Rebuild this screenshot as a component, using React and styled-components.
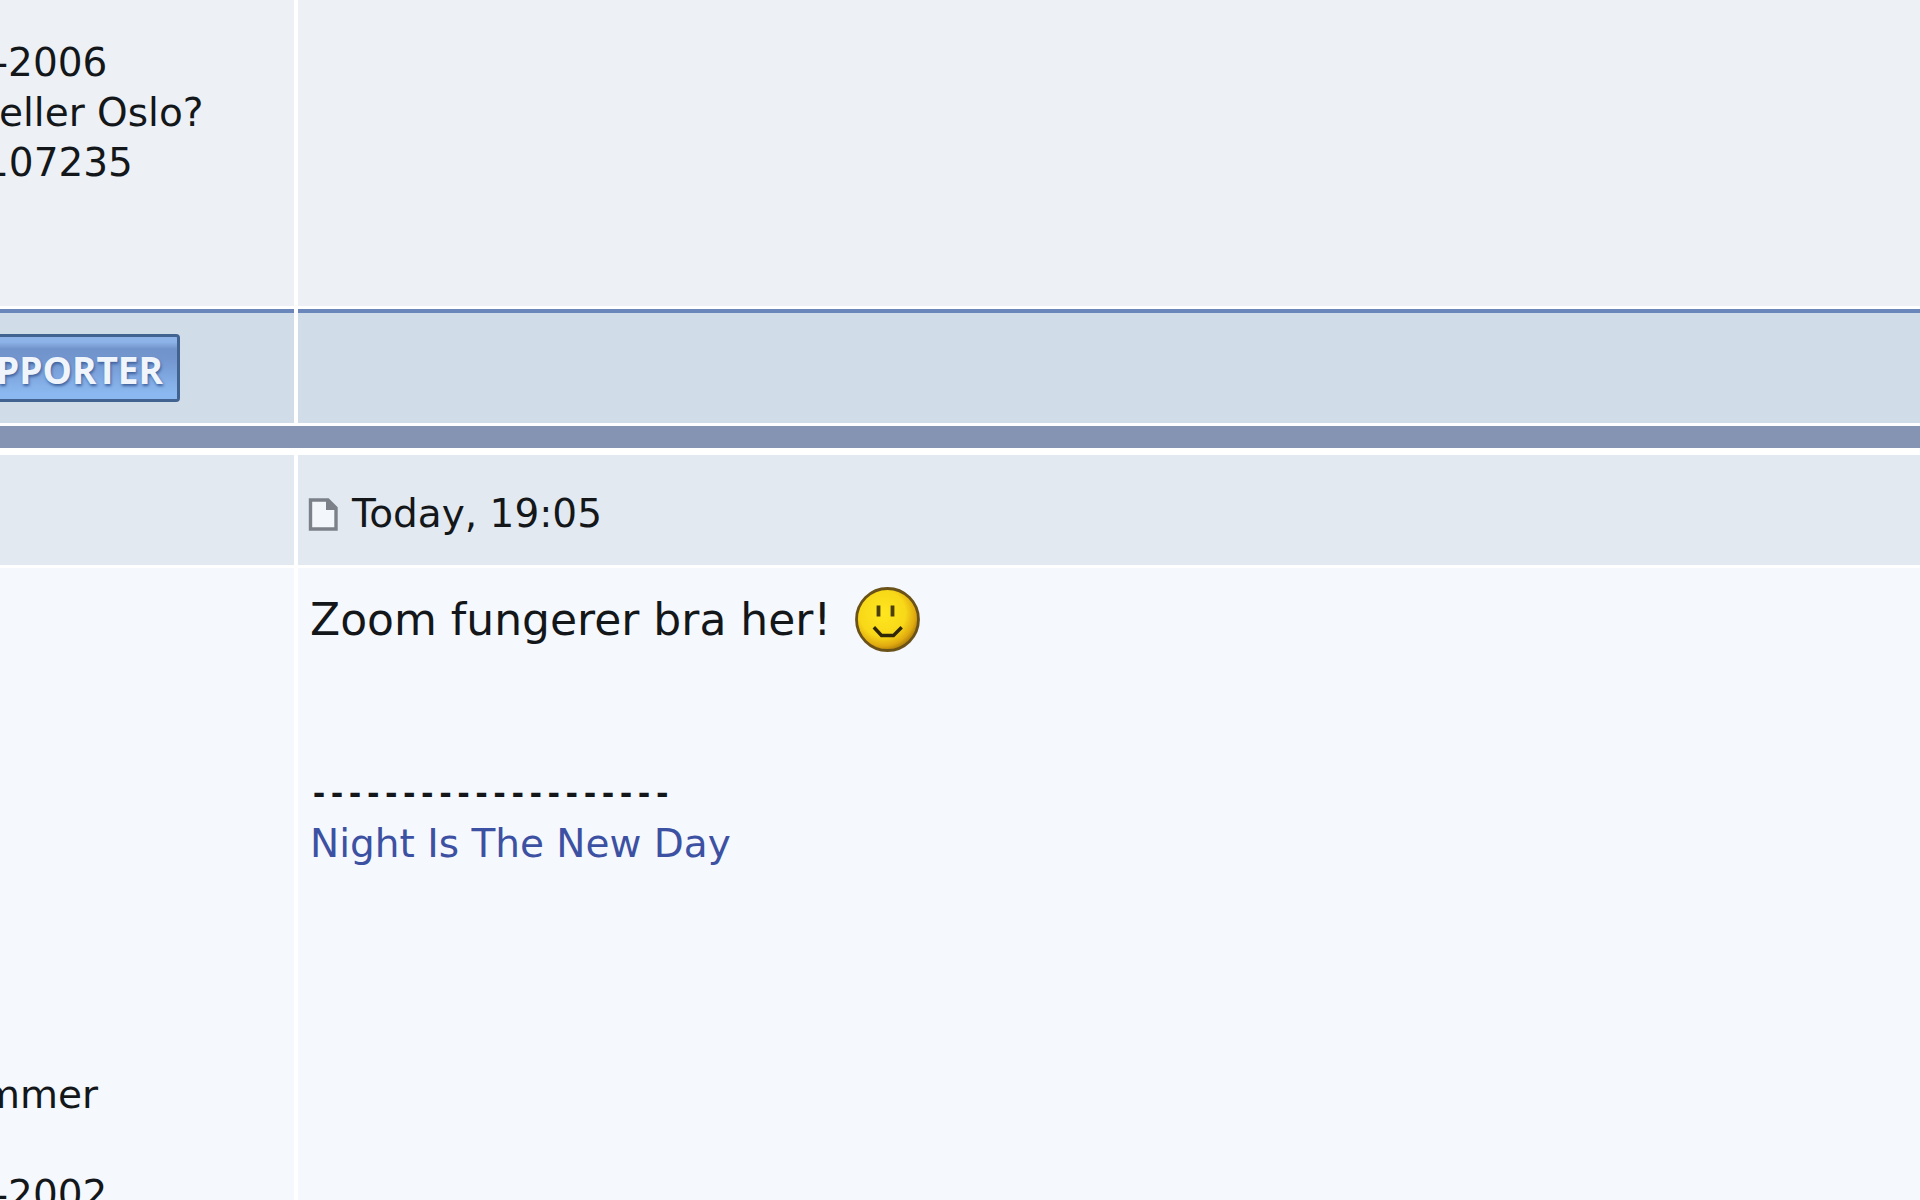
import React from "react";
import styled, { createGlobalStyle } from "styled-components";

const GlobalStyle = createGlobalStyle`
  *, *::before, *::after { box-sizing: border-box; }
  body {
    margin: 0;
    background: #ffffff;
    color: #14171a;
    font-family: "DejaVu Sans", Verdana, sans-serif;
  }
`;

const Thread = styled.main`
  display: flex;
  flex-direction: column;
  height: 100vh;
  overflow: hidden;
`;

const Row = styled.div`
  flex: ${(p) => (p.$grow ? "1 0 auto" : "none")};
  display: grid;
  grid-template-columns: 294px minmax(0, 1fr);
  column-gap: 4px;
`;

const Cell = styled.div`
  min-width: 0;
  background: ${(p) => p.$bg};
`;

const FooterCell = styled(Cell)`
  border-top: 4px solid #6b86ba;
  padding: 21px 0;
`;

const HeaderCell = styled(Cell)`
  display: flex;
  align-items: center;
  gap: 14px;
  padding: 34px 10px 26px;
`;

const Profile = styled(Cell)`
  padding-top: ${(p) => p.$top}px;
  padding-bottom: 118px;
  overflow: hidden;
  font-size: 39px;
  line-height: 50px;
  white-space: nowrap;
`;

const ProfileLine = styled.div`
  min-height: 50px;
  text-indent: ${(p) => p.$indent}px;
`;

const Divider = styled.div`
  flex: none;
  height: 32px;
  border-top: 3px solid #ffffff;
  border-bottom: 7px solid #ffffff;
  background: #8494b2;
`;

const Rule = styled.div`
  flex: none;
  height: 3px;
  background: #ffffff;
`;

const Badge = styled.div`
  display: flex;
  align-items: center;
  justify-content: flex-end;
  width: 180px;
  height: 68px;
  padding: 4px 14px 0 0;
  overflow: hidden;
  border: 3px solid #42628f;
  border-left: 0;
  border-radius: 0 4px 4px 0;
  background: linear-gradient(#8db3e8 0, #8db3e8 5px, #7193cb 12px, #7396cf 22px, #8bb8f0 56px);
  color: #f0f5fc;
  font: bold 37px/50px "Open Sans", sans-serif;
  text-shadow: 1px 2px 3px #3f619c;
`;

const PostDate = styled.time`
  font-size: 39px;
  line-height: 50px;
`;

const Content = styled(Cell)`
  padding: 19px 12px 0;
`;

const Message = styled.div`
  display: flex;
  align-items: center;
  gap: 24px;
  height: 65px;
  font-size: 44px;
  white-space: nowrap;
`;

const Signature = styled.footer`
  margin-top: 117px;
  font-size: 39px;
  line-height: 50px;
`;

const Dashes = styled.div`
  font-family: "DejaVu Sans Mono", monospace;
  font-weight: bold;
  font-size: 30px;
`;

const SignatureLink = styled.a`
  color: #3d51a3;
  text-decoration: none;
`;

function PostIcon() {
  return (
    <svg width="30" height="33" viewBox="0 0 30 33" aria-hidden="true">
      <path d="M2.5 2H20L28 10V31H2.5Z" fill="#f3f6fb" stroke="#7c8189" strokeWidth="3.4" />
      <path d="M18 2H21L28 9V12H18Z" fill="#7c8189" />
    </svg>
  );
}

function Smiley() {
  return (
    <svg width="65" height="65" viewBox="0 0 65 65" role="img" aria-label="smile">
      <defs>
        <radialGradient id="face" cx="0.42" cy="0.4" r="0.62">
          <stop offset="0" stopColor="#ffe620" />
          <stop offset="0.6" stopColor="#f8d818" />
          <stop offset="0.85" stopColor="#e0aa10" />
          <stop offset="1" stopColor="#a87908" />
        </radialGradient>
      </defs>
      <circle cx="32.5" cy="32.5" r="31" fill="url(#face)" stroke="#6b5219" strokeWidth="2.8" />
      <path d="M23.5 18.5V29.5M37.5 18.5V29.5" stroke="#4b3e08" strokeWidth="3.8" />
      <path
        d="M20 41.5L26.5 48.5H38.5L45.5 41.5"
        fill="none"
        stroke="#2e2606"
        strokeWidth="3.4"
        strokeLinecap="square"
      />
    </svg>
  );
}

export default function App() {
  return (
    <>
      <GlobalStyle />
      <Thread>
        <Row>
          <Profile $bg="#edf0f5" $top={38}>
            <ProfileLine $indent={-6}>-2006</ProfileLine>
            <ProfileLine $indent={-1}>eller Oslo?</ProfileLine>
            <ProfileLine $indent={-16}>107235</ProfileLine>
          </Profile>
          <Cell $bg="#edf0f5" />
        </Row>
        <Rule />
        <Row>
          <FooterCell $bg="#d1dce9">
            <Badge>PPORTER</Badge>
          </FooterCell>
          <FooterCell $bg="#d1dce9" />
        </Row>
        <Divider />
        <Row>
          <HeaderCell $bg="#e3e9f1" />
          <HeaderCell $bg="#e3e9f1">
            <PostIcon />
            <PostDate>Today, 19:05</PostDate>
          </HeaderCell>
        </Row>
        <Rule />
        <Row $grow>
          <Profile $bg="#f5f8fd" $top={502}>
            <ProfileLine $indent={-18}>mmer</ProfileLine>
            <ProfileLine />
            <ProfileLine $indent={-6}>-2002</ProfileLine>
          </Profile>
          <Content $bg="#f5f8fd">
            <Message>
              <span>Zoom fungerer bra her!</span>
              <Smiley />
            </Message>
            <Signature>
              <Dashes>--------------------</Dashes>
              <SignatureLink href="#">Night Is The New Day</SignatureLink>
            </Signature>
          </Content>
        </Row>
      </Thread>
    </>
  );
}
